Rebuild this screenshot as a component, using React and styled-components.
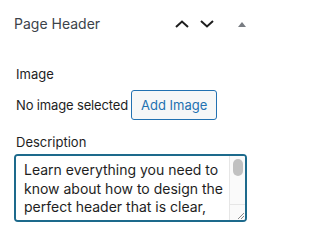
import React from "react";
import styled, { createGlobalStyle } from "styled-components";

const Global = createGlobalStyle`
  html, body { margin: 0; padding: 0; background: #fff; }
  body { font-family: Inter, "Liberation Sans", sans-serif; }
`;

const Panel = styled.div`
  width: 261px;
  height: 241px;
  box-sizing: border-box;
  padding: 12px 0 0 0;
  background: #fff;
`;

const Header = styled.div`
  display: flex;
  align-items: center;
  height: 24px;
  padding: 0 15px 0 14px;
`;

const Title = styled.h2`
  margin: 0;
  flex: 1;
  font-size: 14px;
  font-weight: 400;
  color: #3c434a;
  line-height: 24px;
`;

const IconButton = styled.button`
  width: 24px;
  height: 24px;
  padding: 0;
  margin: 0 ${(p) => p.$mr || 0}px 0 0;
  border: 0;
  background: none;
  display: flex;
  align-items: center;
  justify-content: center;
  color: #1e1e1e;
`;

const Toggle = styled.span`
  width: 0;
  height: 0;
  margin-left: 19px;
  border-left: 4px solid transparent;
  border-right: 4px solid transparent;
  border-bottom: 5px solid #787c82;
`;

const Body = styled.div`
  padding: 30px 14px 0 16px;
  display: flex;
  flex-direction: column;
`;

const Label = styled.div`
  font-size: 13px;
  color: #1e1e1e;
  line-height: 16px;
  margin-top: ${(p) => p.$mt || 0}px;
  margin-bottom: ${(p) => p.$mb || 0}px;
`;

const Row = styled.div`
  display: flex;
  align-items: center;
  gap: 3px;
`;

const Text = styled.span`
  font-size: 13px;
  letter-spacing: -0.15px;
  color: #1e1e1e;
`;

const Button = styled.button`
  font-family: inherit;
  font-size: 13px;
  color: #2271b1;
  background: #f6f7f7;
  border: 1px solid #2271b1;
  border-radius: 3px;
  height: 30px;
  padding: 0 9px;
  box-sizing: border-box;
`;

const AreaBox = styled.div`
  position: relative;
  margin-left: -2px;
  width: 233px;
  height: 68px;
  box-sizing: border-box;
  border: 2px solid #1d6a8c;
  border-radius: 4px;
  overflow: hidden;
`;

const Area = styled.textarea`
  display: block;
  width: 100%;
  height: 100%;
  box-sizing: border-box;
  border: 0;
  padding: 5px 18px 0 8px;
  margin: 0;
  font-family: inherit;
  font-size: 14px;
  line-height: 18.5px;
  color: #1e1e1e;
  resize: none;
  outline: none;
  overflow: hidden;
  caret-color: #1e1e1e;
`;

const ScrollTrack = styled.div`
  position: absolute;
  top: 0;
  right: 0;
  bottom: 0;
  width: 15px;
  background: #fafafa;
  border-left: 1px solid #e6e6e6;
  display: flex;
  flex-direction: column;
`;

const Thumb = styled.div`
  margin: 3px 2px 0 3px;
  height: 17px;
  border-radius: 5px;
  background: #c1c1c1;
`;

const Corner = styled.div`
  margin-top: auto;
  height: 15px;
  border-top: 1px solid #e6e6e6;
  display: flex;
  align-items: flex-end;
  justify-content: flex-end;
`;

const Grip = () => (
  <svg width="9" height="9" viewBox="0 0 9 9">
    <path d="M8 2 L2 8 M8 5 L5 8" stroke="#8a8a8a" strokeWidth="1" />
  </svg>
);

const Chevron = ({ up }) => (
  <svg width="14" height="8" viewBox="0 0 14 8">
    <path
      d={up ? "M1 7 L7 1.5 L13 7" : "M1 1 L7 6.5 L13 1"}
      fill="none"
      stroke="currentColor"
      strokeWidth="2"
    />
  </svg>
);

export default function App() {
  return (
    <>
      <Global />
      <Panel>
        <Header>
          <Title>Page Header</Title>
          <IconButton aria-label="Move up" $mr={1.5}><Chevron up /></IconButton>
          <IconButton aria-label="Move down"><Chevron /></IconButton>
          <Toggle />
        </Header>
        <Body>
          <Label $mb={8}>Image</Label>
          <Row>
            <Text>No image selected</Text>
            <Button>Add Image</Button>
          </Row>
          <Label $mt={14} $mb={4}>Description</Label>
          <AreaBox>
            <Area
              defaultValue="Learn everything you need to know about how to design the perfect header that is clear, concise and compelling for your visitors."
            />
            <ScrollTrack>
              <Thumb />
              <Corner><Grip /></Corner>
            </ScrollTrack>
          </AreaBox>
        </Body>
      </Panel>
    </>
  );
}
